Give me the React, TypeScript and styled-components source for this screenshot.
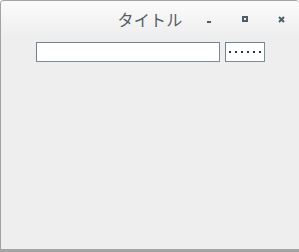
import React from "react";
import styled, { createGlobalStyle } from "styled-components";

const Global = createGlobalStyle`
  html, body { margin: 0; padding: 0; background: #ffffff; }
  body { font-family: "Noto Sans CJK JP", "Noto Sans", sans-serif; }
`;

const Window = styled.div`
  box-sizing: border-box;
  width: 299px;
  height: 252px;
  border: 1px solid #a3a3a3;
  border-right: none;
  border-bottom: 3px solid #a4a4a4;
  border-radius: 4px 4px 0 0;
  background: #eeeeee;
  display: flex;
  flex-direction: column;
  overflow: hidden;
`;

const TitleBar = styled.div`
  height: 36px;
  display: grid;
  grid-template-columns: 1fr auto 1fr;
  align-items: center;
  background: linear-gradient(#fbfbfb, #eeeeee);
`;

const Title = styled.div`
  grid-column: 2;
  font-family: "Noto Sans CJK JP", sans-serif;
  font-size: 16px;
  line-height: 18px;
  color: #535e65;
  letter-spacing: 0.3px;
`;

const Controls = styled.div`
  grid-column: 3;
  display: flex;
  justify-content: flex-end;
  align-self: stretch;
`;

const CtrlButton = styled.div`
  width: 36px;
  display: flex;
  align-items: center;
  justify-content: center;
`;

const Content = styled.div`
  display: flex;
  justify-content: center;
  gap: 5px;
  padding-top: 5px;
  padding-left: 1px;
`;

const Field = styled.input<{ $w: number }>`
  box-sizing: border-box;
  width: ${(p) => p.$w}px;
  height: 20px;
  margin: 0;
  padding: 0 3px;
  border: 1px solid #7c8b98;
  border-top-color: #74838f;
  border-left-color: #74838f;
  border-radius: 0;
  background: #ffffff;
  outline: none;
  font-family: "DejaVu Sans", sans-serif;
  font-size: 12px;
  color: #333;
`;

const PassField = styled.div`
  box-sizing: border-box;
  width: 40px;
  height: 20px;
  border: 1px solid #7c8b98;
  border-top-color: #74838f;
  border-left-color: #74838f;
  background: #ffffff;
  display: flex;
  align-items: center;
  gap: 4px;
  padding-left: 3px;
`;

const Dot = styled.span`
  width: 2px;
  height: 2px;
  background: #2e3338;
`;

const iconColor = "#4f5d66";

export default function App() {
  return (
    <>
      <Global />
      <Window>
        <TitleBar>
          <Title>タイトル</Title>
          <Controls>
            <CtrlButton>
              <svg width="6" height="6" viewBox="0 0 6 6" style={{ marginTop: 4 }}>
                <rect x="1" y="3" width="4" height="2" fill={iconColor} />
              </svg>
            </CtrlButton>
            <CtrlButton>
              <svg width="6" height="6" viewBox="0 0 6 6">
                <rect x="1" y="1" width="4" height="4" fill="none" stroke={iconColor} strokeWidth="2" />
              </svg>
            </CtrlButton>
            <CtrlButton>
              <svg width="7" height="7" viewBox="0 0 7 7">
                <path d="M1 1 L6 6 M6 1 L1 6" stroke={iconColor} strokeWidth="2" />
              </svg>
            </CtrlButton>
          </Controls>
        </TitleBar>
        <Content>
          <Field $w={184} type="text" defaultValue="" />
          <PassField aria-label="password">
            {Array.from({ length: 6 }).map((_, i) => (
              <Dot key={i} />
            ))}
          </PassField>
        </Content>
      </Window>
    </>
  );
}
